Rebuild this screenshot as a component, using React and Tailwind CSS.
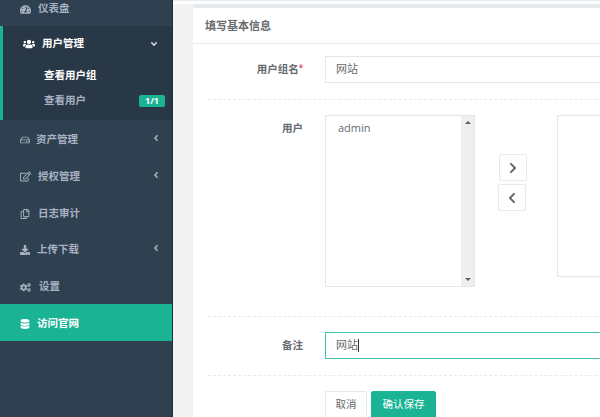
import React from 'react';
import {
  FaTachometerAlt,
  FaUsers,
  FaRegHdd,
  FaRegEdit,
  FaRegCopy,
  FaDownload,
  FaCogs,
  FaDatabase,
  FaAngleDown,
  FaAngleLeft,
  FaChevronRight,
  FaChevronLeft,
} from 'react-icons/fa';

const font = 'font-["Open_Sans","Noto_Sans_CJK_SC",sans-serif]';

const NavItem = ({ icon: Icon, label, arrow, iconClass = 'text-[11px]', gap = 'gap-[7px]' }) => (
  <div className="flex h-[36.8px] items-center pt-[3.5px] pl-[20px] pr-[11px] text-[10.5px] font-bold text-[#a7b1c2]">
    <span className={`flex items-center ${gap}`}>
      <Icon className={iconClass} />
      <span>{label}</span>
    </span>
    {arrow && <FaAngleLeft className="ml-auto -translate-y-[2px] text-[10px]" />}
  </div>
);

const Sidebar = () => (
  <aside className="flex w-[173px] shrink-0 flex-col border-r border-[#1f2d3a] bg-[#2f4050]">
    <div className="-mt-[11px]">
      <NavItem icon={FaTachometerAlt} label="仪表盘" />
    </div>

    {/* active group */}
    <div className="h-[94px] border-l-[3px] border-[#1ab394] bg-[#293846]">
      <div className="flex h-[35px] items-center pt-[2px] pl-[20px] pr-[13px] text-[10.5px] font-bold text-white">
        <FaUsers className="mr-[7px] text-[12px]" />
        <span>用户管理</span>
        <FaAngleDown className="ml-auto text-[10px] text-[#c8ced8]" />
      </div>
      <div className="mt-[3px] flex h-[25px] items-center pl-[41px] text-[10.5px] font-bold text-white">
        查看用户组
      </div>
      <div className="flex h-[25px] items-center pl-[41px] pr-[7px] text-[10.5px] font-bold text-[#a7b1c2]">
        <span>查看用户</span>
        <span className="ml-auto rounded-[2px] bg-[#1ab394] px-[6px] py-[1px] text-[9px] leading-[10px] font-bold text-white">
          1/1
        </span>
      </div>
    </div>

    <NavItem icon={FaRegHdd} label="资产管理" arrow gap="gap-[6px]" iconClass="text-[10px]" />
    <NavItem icon={FaRegEdit} label="授权管理" arrow gap="gap-[7px]" />
    <NavItem icon={FaRegCopy} label="日志审计" gap="gap-[8px]" iconClass="text-[10px]" />
    <NavItem icon={FaDownload} label="上传下载" arrow gap="gap-[7px]" iconClass="text-[10px]" />
    <NavItem icon={FaCogs} label="设置" gap="gap-[8px]" />

    <div className="flex h-[37px] items-center gap-[7px] bg-[#1ab394] pt-[4px] pl-[20px] text-[10.5px] font-bold text-white">
      <FaDatabase className="text-[10px]" />
      <span>访问官网</span>
    </div>
  </aside>
);

const Dashed = ({ className = '' }) => (
  <div className={`border-t border-dashed border-[#e7eaec] ${className}`} />
);

const Label = ({ children }) => (
  <div className="w-[95px] shrink-0 text-right text-[10.5px] font-bold text-[#676a6c]">{children}</div>
);

const ListBox = () => (
  <div className="flex h-[172px] w-[150px] shrink-0 border border-[#e5e6e7] bg-white">
    <div className="flex-1 px-[12px] py-[4px] text-[11px] leading-[15px] text-[#676a6c]">admin</div>
    <div className="flex w-[13px] flex-col items-center justify-between bg-[#efefef] py-[5px]">
      <div className="h-0 w-0 border-x-[3px] border-b-[3px] border-x-transparent border-b-[#606060]" />
      <div className="h-0 w-0 border-x-[3px] border-t-[3px] border-x-transparent border-t-[#606060]" />
    </div>
  </div>
);

const ArrowButton = ({ icon: Icon, className = '' }) => (
  <button className={`flex h-[27px] w-[28px] items-center justify-center rounded-[2px] border border-[#e7eaec] bg-white text-[#5c6670] ${className}`}>
    <Icon className="text-[12px]" />
  </button>
);

const Form = () => (
  <div className="flex w-[500px] shrink-0 flex-col bg-white px-[15px]">
    {/* group name */}
    <div className="mt-[12px] flex items-center gap-[22px]">
      <Label>
        用户组名<span className="align-top text-[8px] text-[#ed5565]">*</span>
      </Label>
      <div className="flex h-[27px] flex-1 items-center border border-[#e5e6e7] px-[10px] text-[11px] text-[#676a6c]">
        网站
      </div>
    </div>
    <Dashed className="mt-[16px]" />

    {/* users */}
    <div className="mt-[15px] flex gap-[22px]">
      <div className="pt-[6px]">
        <Label>用户</Label>
      </div>
      <ListBox />
      <div className="ml-[1px] flex w-[37px] shrink-0 flex-col items-start gap-[3px] pt-[39px]">
        <ArrowButton icon={FaChevronRight} className="ml-[1px]" />
        <ArrowButton icon={FaChevronLeft} />
      </div>
      <div className="h-[162px] flex-1 border border-[#e5e6e7] bg-white" />
    </div>
    <Dashed className="mt-[29px]" />

    {/* remark */}
    <div className="mt-[15px] flex items-center gap-[22px]">
      <Label>备注</Label>
      <div className="flex h-[27px] flex-1 items-center border border-[#3dc4a8] px-[10px] text-[11px] text-[#676a6c]">
        网站
        <span className="h-[13px] w-px bg-[#333]" />
      </div>
    </div>
    <Dashed className="mt-[16px]" />

    {/* actions */}
    <div className="mt-[15px] ml-[117px] flex gap-[4px]">
      <button className="h-[28px] w-[42px] rounded-[2px] border border-[#e7eaec] bg-white text-[10.5px] text-[#676a6c]">
        取消
      </button>
      <button className="h-[28px] w-[65px] rounded-[2px] border border-[#1ab394] bg-[#1ab394] text-[10.5px] text-white">
        确认保存
      </button>
    </div>
  </div>
);

export default function App() {
  return (
    <div className={`flex h-[417px] w-[600px] overflow-hidden bg-[#f3f3f4] ${font}`}>
      <Sidebar />
      <main className="min-w-0 flex-1">
        <div className="h-[4px] border-t border-[#e7eaec] bg-white" />
        <div className="pl-[20px]">
          <div className="h-[4px] w-[500px] bg-[#e7eaec]" />
          <div className="flex h-[36px] w-[500px] items-center border-b border-[#e7eaec] bg-white pt-[2px] pl-[12px] text-[11px] font-bold text-[#676a6c]">
            填写基本信息
          </div>
          <Form />
        </div>
      </main>
    </div>
  );
}
